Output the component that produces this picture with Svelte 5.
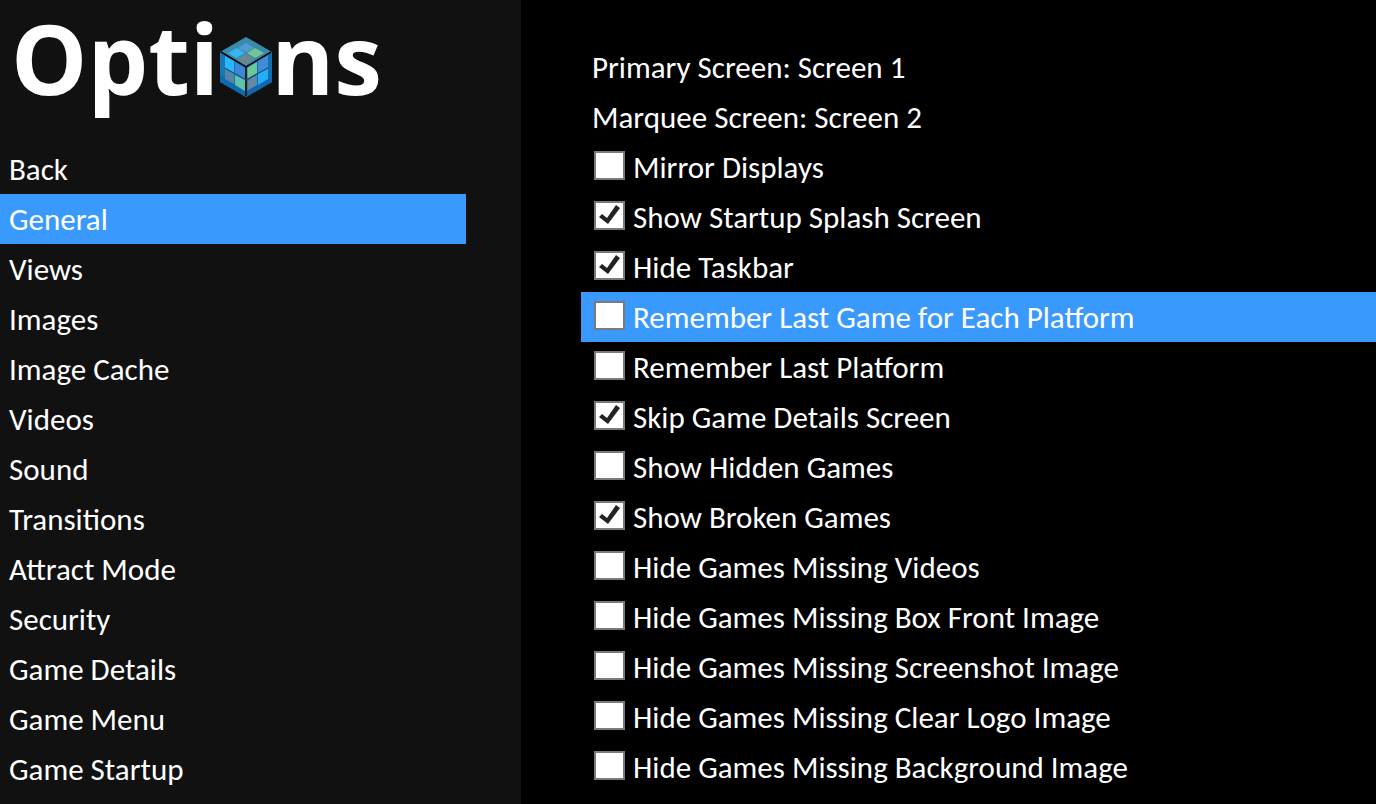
<script>
	let menu = [
		'Back', 'General', 'Views', 'Images', 'Image Cache', 'Videos', 'Sound',
		'Transitions', 'Attract Mode', 'Security', 'Game Details', 'Game Menu', 'Game Startup'
	];
	let current = 'General';

	let screens = [
		{ name: 'Primary Screen', screen: 1 },
		{ name: 'Marquee Screen', screen: 2 }
	];

	let options = [
		{ text: 'Mirror Displays', on: false },
		{ text: 'Show Startup Splash Screen', on: true },
		{ text: 'Hide Taskbar', on: true },
		{ text: 'Remember Last Game for Each Platform', on: false },
		{ text: 'Remember Last Platform', on: false },
		{ text: 'Skip Game Details Screen', on: true },
		{ text: 'Show Hidden Games', on: false },
		{ text: 'Show Broken Games', on: true },
		{ text: 'Hide Games Missing Videos', on: false },
		{ text: 'Hide Games Missing Box Front Image', on: false },
		{ text: 'Hide Games Missing Screenshot Image', on: false },
		{ text: 'Hide Games Missing Clear Logo Image', on: false },
		{ text: 'Hide Games Missing Background Image', on: false }
	];
	let focused = 3;

	const swapScreen = (item) => {
		item.screen = item.screen === 1 ? 2 : 1;
		screens = screens;
	};
</script>

<div class="page">
	<aside>
		<h1>
			<span>Opti</span>
			<svg viewBox="0 0 54 62" role="img" aria-label="o">
				<path d="M27 1 53 16 27 31 1 16z" fill="#388bad" />
				<path d="M1 16 27 31V61L1 46z" fill="#1678b4" />
				<path d="M53 16 27 31V61L53 46z" fill="#126fae" />
				<path d="M1 39 27 54 53 39V46L27 61 1 46z" fill="#1068ae" />
				<path d="M27 7 35 12 27 16 19 12z" fill="#5399d5" />
				<path d="M18 12 26 17 17 22 9 17z" fill="#36b5ee" />
				<path d="M36 12 45 17 36 22 28 17z" fill="#70c795" />
				<path d="M27 18 35 23 27 29 18 23z" fill="#6c8790" />
				<path d="M6 20 15 25V37L6 32z" fill="#29b6fc" />
				<path d="M16 26 26 32V43L16 37z" fill="#3b87d8" />
				<path d="M6 33 15 38V48L6 43z" fill="#5685a6" />
				<path d="M16 39 26 44V55L16 49z" fill="#60c3a9" />
				<path d="M28 32 38 26V37L28 43z" fill="#68c897" />
				<path d="M39 25 49 19V31L39 37z" fill="#438ad8" />
				<path d="M28 45 38 39V49L28 55z" fill="#6588a3" />
				<path d="M39 38 49 32V43L39 49z" fill="#24adf9" />
				<path d="M2 16 27 31 52 16M27 31V60" fill="none" stroke="#090607" stroke-width="1.5" />
				<path d="M28 32V60" stroke="#67302b" stroke-width="0.6" />
				<path d="M6 32 27 44 49 32" fill="none" stroke="#204a62" stroke-width="1" />
			</svg>
			<span>ns</span>
		</h1>
		<nav>
			{#each menu as item}
				<button class:selected={item === current} on:click={() => (current = item)}>{item}</button>
			{/each}
		</nav>
	</aside>

	<main>
		{#each screens as item}
			<button class="row" on:click={() => swapScreen(item)}>{item.name}: Screen {item.screen}</button>
		{/each}
		{#each options as option, i}
			<label class="row" class:selected={i === focused}>
				<input type="checkbox" bind:checked={option.on} on:focus={() => (focused = i)}>
				<span>{option.text}</span>
			</label>
		{/each}
	</main>
</div>

<style>
	:global(body) {
		margin: 0;
		background-color: #000;
	}
	.page {
		display: grid;
		grid-template-columns: 521px 1fr;
		min-height: 100vh;
		color: #fff;
		font-family: Calibri, Carlito, Lato, sans-serif;
		font-size: 31px;
		line-height: 48px;
	}
	aside {
		background-color: #111;
	}
	h1 {
		display: flex;
		height: 144px;
		margin: 0;
		padding-left: 11px;
		box-sizing: border-box;
		font: bold 96px/116px "Open Sans", sans-serif;
	}
	h1 svg {
		width: 54px;
		height: 62px;
		margin: 36px -2px 0 0;
	}
	nav {
		display: flex;
		flex-direction: column;
		margin-right: 55px;
	}
	button,
	.row {
		box-sizing: border-box;
		height: 50px;
		padding: 0 9px;
		border: 0;
		background: none;
		color: inherit;
		font: inherit;
		text-align: left;
		white-space: nowrap;
		cursor: pointer;
	}
	main {
		display: flex;
		flex-direction: column;
		padding: 42px 0 12px 60px;
	}
	.row {
		display: flex;
		align-items: center;
		padding: 0 11px;
	}
	.selected {
		background-color: #3a99fd;
	}
	input {
		appearance: none;
		flex: none;
		width: 31px;
		height: 29px;
		margin: 0 8px 3px 2px;
		border: 2px solid #7a7a7a;
		background-color: #fff;
	}
	input:checked::before {
		content: '';
		display: block;
		height: 100%;
		background-color: #222;
		clip-path: polygon(3px 14px, 6px 11px, 11px 15px, 20px 2px, 24px 5px, 12px 21px);
	}
	button:focus-visible,
	input:focus-visible {
		outline: 1px dotted #fff;
	}
</style>
